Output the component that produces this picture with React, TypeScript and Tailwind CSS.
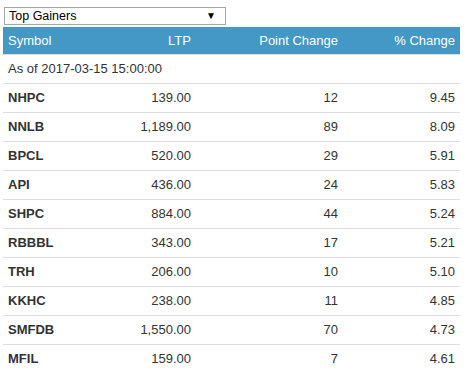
import React from 'react';

type Row = { symbol: string; ltp: string; change: string; pct: string };

const rows: Row[] = [
  { symbol: 'NHPC', ltp: '139.00', change: '12', pct: '9.45' },
  { symbol: 'NNLB', ltp: '1,189.00', change: '89', pct: '8.09' },
  { symbol: 'BPCL', ltp: '520.00', change: '29', pct: '5.91' },
  { symbol: 'API', ltp: '436.00', change: '24', pct: '5.83' },
  { symbol: 'SHPC', ltp: '884.00', change: '44', pct: '5.24' },
  { symbol: 'RBBBL', ltp: '343.00', change: '17', pct: '5.21' },
  { symbol: 'TRH', ltp: '206.00', change: '10', pct: '5.10' },
  { symbol: 'KKHC', ltp: '238.00', change: '11', pct: '4.85' },
  { symbol: 'SMFDB', ltp: '1,550.00', change: '70', pct: '4.73' },
  { symbol: 'MFIL', ltp: '159.00', change: '7', pct: '4.61' },
];

const cols = 'grid grid-cols-[98px_95px_147px_117px]';

export default function App() {
  return (
    <div
      className="w-[471px] h-[372px] bg-white overflow-hidden text-[13px] text-[#333]"
      style={{ fontFamily: '"Liberation Sans", Arial, sans-serif' }}
    >
      {/* Dropdown */}
      <div className="pt-[7px] pl-[4px]">
        <div className="w-[222px] h-[18px] border border-[#a6a6a6] bg-white flex items-center justify-between pl-[4px] pr-[9px] text-[12.5px] text-black">
          <span>Top Gainers</span>
          <span className="text-[10px] leading-none">▼</span>
        </div>
      </div>

      {/* Table */}
      <div className="mt-[2px] ml-[3px] w-[457px]">
        <div className={`${cols} h-[27px] items-center bg-[#4398c6] text-white border-b border-[#ddd] box-content`}>
          <div className="pl-[5px]">Symbol</div>
          <div className="text-right pr-[5px]">LTP</div>
          <div className="text-right pr-[5px]">Point Change</div>
          <div className="text-right pr-[5px]">% Change</div>
        </div>
        <div className="h-[28px] flex items-center pl-[5px] border-b border-[#ddd] box-content">
          As of 2017-03-15 15:00:00
        </div>
        {rows.map((r) => (
          <div key={r.symbol} className={`${cols} h-[28px] items-center border-b border-[#ddd] box-content`}>
            <div className="pl-[5px] font-bold">{r.symbol}</div>
            <div className="text-right pr-[5px]">{r.ltp}</div>
            <div className="text-right pr-[5px]">{r.change}</div>
            <div className="text-right pr-[5px]">{r.pct}</div>
          </div>
        ))}
      </div>
    </div>
  );
}
